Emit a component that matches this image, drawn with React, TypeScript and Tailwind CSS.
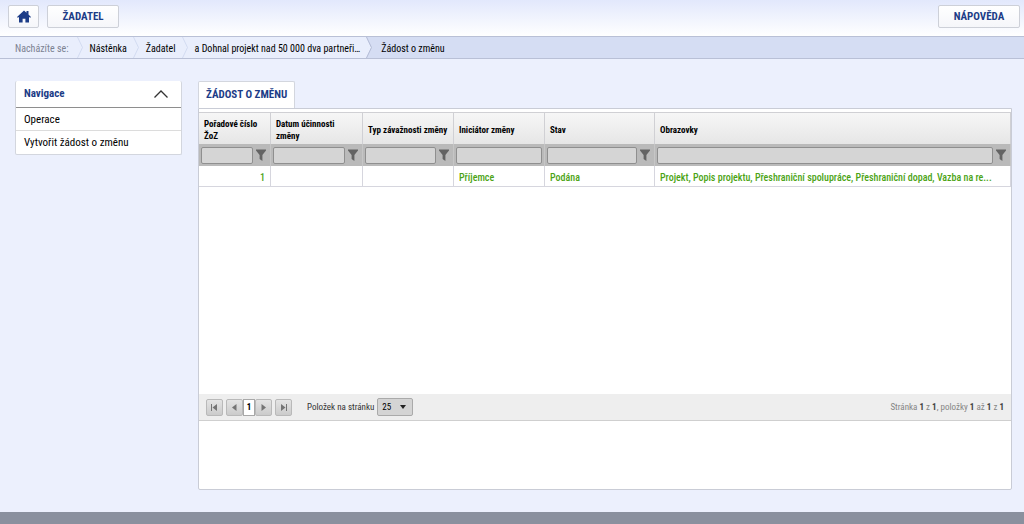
import React from "react";
import clsx from "clsx";

type Column = {
  title: string;
  width: string;
  filter: boolean;
  value: string;
  align?: "right";
};

const columns: Column[] = [
  { title: "Pořadové číslo ŽoZ", width: "w-[72px]", filter: true, value: "1", align: "right" },
  { title: "Datum účinnosti změny", width: "w-[92px]", filter: true, value: "" },
  { title: "Typ závažnosti změny", width: "w-[91px]", filter: true, value: "" },
  { title: "Iniciátor změny", width: "w-[91px]", filter: false, value: "Příjemce" },
  { title: "Stav", width: "w-[110px]", filter: true, value: "Podána" },
  {
    title: "Obrazovky",
    width: "",
    filter: true,
    value: "Projekt, Popis projektu, Přeshraniční spolupráce, Přeshraniční dopad, Vazba na re...",
  },
];

const crumbs = ["Nástěnka", "Žadatel", "a Dohnal projekt nad 50 000 dva partneři…"];

const topButton =
  "flex h-[23px] items-center justify-center rounded-xs border border-[#cdd0d8] bg-linear-to-b from-white to-[#f5f6fa] text-[11px] font-bold text-[#1c3c87]";

function Funnel() {
  return (
    <svg viewBox="0 0 10 12" className="h-3 w-2.5 fill-[#636363]">
      <path d="M0 0.5h10v1L6.4 6v6L3.6 10V6L0 1.5z" />
    </svg>
  );
}

function CrumbArrow({ className }: { className: string }) {
  return (
    <svg viewBox="0 0 7 21" className={clsx("h-[21px] w-[7px] shrink-0", className)}>
      <path d="M0 0L5 10.5L0 21z" fill="#e9eefc" />
      <path d="M0.5 0L5.5 10.5L0.5 21" fill="none" stroke="currentColor" />
    </svg>
  );
}

function PagerButton({ label, path, className }: { label: string; path: string; className?: string }) {
  return (
    <button
      aria-label={label}
      className={clsx(
        "flex h-[17px] w-[17px] items-center justify-center rounded-xs border border-[#b9b9b9] bg-linear-to-b from-[#e4e4e4] to-[#cbcbcb]",
        className,
      )}
    >
      <svg viewBox="0 0 9 9" className="h-[9px] w-[9px] fill-[#747474]">
        <path d={path} />
      </svg>
    </button>
  );
}

function Header() {
  return (
    <header className="flex h-9 items-start justify-between bg-linear-to-b from-[#e2e8fc] to-white pt-[5px] pr-1 pl-2">
      <div className="flex gap-2">
        <a href="#" aria-label="Domů" className={clsx(topButton, "w-[31px]")}>
          <svg viewBox="0 0 14 13" className="h-[13px] w-3.5 fill-[#1c3c87]">
            <path d="M7 0.5L9.5 2.8V1H11.5V4.6L14 7L13.2 7.8L12 7V12.5H8.4V8.8H5.6V12.5H2V7L0.8 7.8L0 7z" />
          </svg>
        </a>
        <a href="#" className={clsx(topButton, "w-[72px] pt-0.5")}>
          ŽADATEL
        </a>
      </div>
      <a href="#" className={clsx(topButton, "w-[82px] pt-0.5")}>
        NÁPOVĚDA
      </a>
    </header>
  );
}

function Breadcrumbs() {
  return (
    <nav
      aria-label="Drobečková navigace"
      className="flex h-[23px] items-center border-y border-[#b9c0d6] bg-[#d5ddf3] text-[10px] leading-[15px] text-black"
    >
      <div className="flex h-[21px] items-center bg-[#e9eefc] pl-[15px]">
        <span className="mr-2 pt-0.5 text-[#7c8292]">Nacházíte se:</span>
        {crumbs.map((crumb) => (
          <React.Fragment key={crumb}>
            <CrumbArrow className="text-[#d2dbf1]" />
            <a href="#" className="mx-1.5 pt-0.5 whitespace-nowrap">
              {crumb}
            </a>
          </React.Fragment>
        ))}
      </div>
      <CrumbArrow className="text-[#b4bcd5]" />
      <span className="ml-2 pt-0.5">Žádost o změnu</span>
    </nav>
  );
}

function Sidebar() {
  return (
    <aside className="w-[167px] shrink-0 self-start rounded-xs border border-t-0 border-[#d3d6de] bg-white text-[11px] text-black">
      <button className="flex h-[27px] w-full items-center justify-between border-b border-[#8e8e8e] pr-[13px] pl-2 font-bold text-[#1c3c87]">
        Navigace
        <svg viewBox="0 0 14 8" className="h-2 w-3.5 fill-none stroke-[#333]">
          <path d="M0.5 7.5L7 1L13.5 7.5" strokeWidth="1.3" />
        </svg>
      </button>
      <a href="#" className="flex h-[23px] items-center border-b border-[#dcdcdc] px-2 pt-0.5">
        Operace
      </a>
      <a href="#" className="flex h-[23px] items-center px-2 pt-0.5">
        Vytvořit žádost o změnu
      </a>
    </aside>
  );
}

function Grid() {
  return (
    <table className="w-full table-fixed border-separate border-spacing-0">
      <thead>
        <tr className="h-8 bg-linear-to-b from-[#f7f7f7] to-[#e6e6e6]">
          {columns.map((col) => (
            <th
              key={col.title}
              className={clsx(
                "border-t border-r border-[#d0d0d4] px-[5px] pt-0.5 text-left text-[9px] leading-3 font-bold text-black",
                col.width,
              )}
            >
              {col.title}
            </th>
          ))}
        </tr>
        <tr className="h-[22px] bg-[#bababa]">
          {columns.map((col) => (
            <td key={col.title} className="border-r border-[#c6c6c6] px-0.5">
              <div className="flex items-center gap-[3px]">
                <input
                  aria-label={col.title}
                  className="h-[17px] min-w-0 flex-1 rounded-xs border border-[#8f8f8f] bg-[#d5d5d5] px-1 text-[10px]"
                />
                {col.filter && (
                  <button aria-label={`Filtr ${col.title}`} className="mr-0.5">
                    <Funnel />
                  </button>
                )}
              </div>
            </td>
          ))}
        </tr>
      </thead>
      <tbody>
        <tr className="h-[21px] text-[10px] leading-[15px] font-medium text-[#4ba314]">
          {columns.map((col) => (
            <td
              key={col.title}
              className={clsx(
                "truncate border-r border-b border-[#d6d6de] px-[5px] pt-0.5",
                col.align === "right" && "text-right",
              )}
            >
              {col.value}
            </td>
          ))}
        </tr>
      </tbody>
    </table>
  );
}

function Pager() {
  return (
    <div className="flex h-[27px] items-center border-b border-[#cfcfcf] bg-[#eeeeee] px-[7px] text-[9px] text-[#333]">
      <PagerButton label="První stránka" path="M1 1h1v7H1zM7 1v7L2.5 4.5z" />
      <PagerButton label="Předchozí stránka" path="M6.5 1v7L2 4.5z" className="ml-[3px]" />
      <span className="flex h-[17px] w-3 items-center justify-center border border-[#a8a8a8] bg-white pt-0.5 font-bold text-black">
        1
      </span>
      <PagerButton label="Další stránka" path="M2.5 1v7L7 4.5z" />
      <PagerButton label="Poslední stránka" path="M7 1h1v7H7zM2 1v7l4.5-3.5z" className="ml-[3px]" />
      <label htmlFor="page-size" className="mr-[3px] ml-[15px] pt-0.5">
        Položek na stránku
      </label>
      <div className="relative">
        <select
          id="page-size"
          className="block h-[18px] w-9 appearance-none rounded-xs border border-[#aaa] bg-[#d4d4d4] pt-0.5 pl-1 text-[9px] text-black"
        >
          <option>25</option>
        </select>
        <svg viewBox="0 0 6 4" className="pointer-events-none absolute top-[7px] right-[7px] h-1 w-1.5 fill-[#222]">
          <path d="M0 0h6L3 4z" />
        </svg>
      </div>
      <span className="ml-auto pt-0.5 text-[#858585]">
        Stránka <b className="text-[#444]">1</b> z <b className="text-[#444]">1</b>, položky{" "}
        <b className="text-[#444]">1</b> až <b className="text-[#444]">1</b> z <b className="text-[#444]">1</b>
      </span>
    </div>
  );
}

export default function App() {
  return (
    <div className="flex min-h-screen flex-col bg-[#ecf0fd] font-['Roboto_Condensed','Liberation_Sans_Narrow',Roboto,sans-serif]">
      <Header />
      <Breadcrumbs />
      <main className="flex flex-1 gap-4 pt-[22px] pr-3 pb-[22px] pl-[15px]">
        <Sidebar />
        <section className="flex min-w-0 flex-1 flex-col">
          <h1 className="flex h-[27px] items-center self-start rounded-t-xs border border-b-0 border-[#d3d6de] bg-white px-[7px] text-[11px] font-bold text-[#1c3c87]">
            ŽÁDOST O ZMĚNU
          </h1>
          <div className="flex-1 rounded-b-xs border border-[#c9ccd6] bg-white pt-[3px]">
            <div className="min-h-[282px]">
              <Grid />
            </div>
            <Pager />
          </div>
        </section>
      </main>
      <footer className="h-3 bg-[#8a909e]" />
    </div>
  );
}
